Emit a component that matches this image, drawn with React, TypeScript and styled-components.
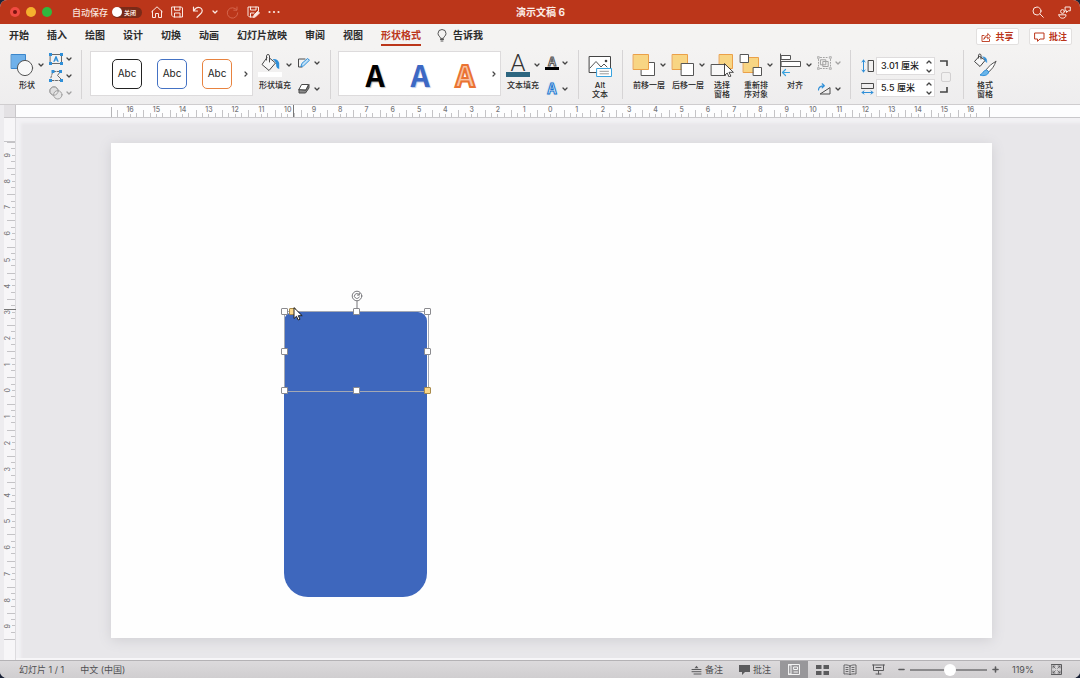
import React from "react";
import styled, { createGlobalStyle, css } from "styled-components";

const latin = `Inter, "Noto Sans CJK SC", sans-serif`;
const cjk = `"Noto Sans CJK SC", sans-serif`;
const red = "#bb361a";
const ink = "#444";
const blue = "#2f8fd8";

const GlobalStyle = createGlobalStyle`
  *, *::before, *::after { box-sizing: border-box; }
  html, body { margin: 0; height: 100%; background: #1c2438; }
  #root { height: 100%; }
  button, input { font: inherit; color: inherit; margin: 0; padding: 0; border: 0; background: none; }
  svg { display: block; flex: none; }
`;

const Window = styled.div`
  display: flex;
  flex-direction: column;
  min-height: 100vh;
  border-radius: 7px;
  overflow: hidden;
  background: #e8e7ea;
  font-family: ${latin};
  font-size: 9px;
  color: #333;
`;

/* ---------- title bar ---------- */

const TitleBar = styled.header`
  display: grid;
  grid-template-columns: 1fr auto 1fr;
  align-items: center;
  height: 24px;
  padding: 0 9px 0 10px;
  background: ${red};
  color: #f8e3dc;
`;

const TitleSide = styled.div<{ $end?: boolean }>`
  display: flex;
  align-items: center;
  gap: ${(p) => (p.$end ? 14 : 8)}px;
  justify-content: ${(p) => (p.$end ? "flex-end" : "flex-start")};
`;

const Lights = styled.div`
  display: flex;
  gap: 6px;
  margin-right: 12px;
`;

const Light = styled.button<{ $color: string; $dot?: boolean }>`
  display: grid;
  place-items: center;
  width: 10px;
  height: 10px;
  border-radius: 50%;
  background: ${(p) => p.$color};
  ${(p) =>
    p.$dot &&
    css`
      &::after {
        content: "";
        width: 4px;
        height: 4px;
        border-radius: 50%;
        background: #7a1410;
      }
    `}
`;

const AutoSave = styled.label`
  display: flex;
  align-items: center;
  gap: 4px;
  font-size: 9px;
  font-weight: 500;
`;

const Switch = styled.span`
  display: flex;
  align-items: center;
  gap: 2px;
  width: 30px;
  height: 11px;
  border-radius: 6px;
  background: #7a2a18;
  font-size: 6px;
  font-weight: 700;
`;

const SwitchBox = styled.input`
  appearance: none;
  width: 10px;
  height: 10px;
  border-radius: 50%;
  background: #fff;
`;

const QuickTools = styled.div`
  display: flex;
  align-items: center;
  gap: 8px;
  margin-left: 1px;
`;

const IconButton = styled.button`
  display: grid;
  place-items: center;
`;

const Title = styled.h1`
  margin: 0;
  font-size: 10px;
  font-weight: 700;
  line-height: 12px;
  white-space: pre;
  color: #fbece7;
`;

/* ---------- tabs ---------- */

const TabBar = styled.nav`
  display: flex;
  align-items: center;
  height: 24px;
  padding: 0 8px 0 9px;
  background: #f4f3f2;
`;

const TabList = styled.div`
  display: flex;
  gap: 18px;
`;

const Tab = styled.button<{ $active?: boolean }>`
  height: 20px;
  border-bottom: 2px solid ${(p) => (p.$active ? red : "transparent")};
  font-size: 10px;
  font-weight: 700;
  line-height: 16px;
  white-space: nowrap;
  color: ${(p) => (p.$active ? red : "#2c2c2c")};
`;

const TellMe = styled(Tab)`
  display: flex;
  gap: 6px;
  align-items: center;
  margin-left: 16px;
`;

const TabActions = styled.div`
  display: flex;
  gap: 10px;
  margin-left: auto;
`;

const TabAction = styled.button`
  display: flex;
  align-items: center;
  justify-content: center;
  gap: 4px;
  width: 43px;
  height: 17px;
  margin-top: 1px;
  border: 1px solid #e2e0df;
  background: #fff;
  border-radius: 2px;
  color: ${red};
  font-size: 9px;
  font-weight: 700;
`;

/* ---------- ribbon ---------- */

const RibbonBar = styled.section`
  display: flex;
  height: 57px;
  padding: 2px 0 5px;
  border-bottom: 1px solid #cfcdcf;
  background: linear-gradient(#f4f3f2, #eeedee);
`;

const Group = styled.div<{ $start?: number; $end?: number }>`
  display: flex;
  gap: 5px;
  padding: 3px ${(p) => p.$end ?? 10}px 0 ${(p) => p.$start ?? 10}px;
  border-right: 1px solid #d6d4d5;
  &:last-child {
    border-right: 0;
  }
`;

const ToolButton = styled.button<{ $wide?: boolean }>`
  display: flex;
  flex-direction: column;
  align-items: center;
  gap: 4px;
  width: ${(p) => (p.$wide ? 34 : 24)}px;
`;

const ToolFace = styled.span`
  display: flex;
  align-items: center;
  gap: 4px;
  height: 24px;
`;

const ToolLabel = styled.span`
  font-size: 8px;
  font-weight: 500;
  line-height: 9px;
  white-space: pre;
  text-align: center;
  color: #2a2a2a;
`;

const SmallTools = styled.div<{ $rows?: number }>`
  display: flex;
  flex-direction: column;
  justify-content: space-between;
  width: 23px;
  height: ${(p) => (p.$rows === 3 ? 48 : 42)}px;
  margin-top: ${(p) => (p.$rows === 3 ? -1 : 1)}px;
  padding-top: 2px;
  padding-top: ${(p) => (p.$rows === 3 ? 0 : 2)}px;
`;

const SmallTool = styled.button<{ $dim?: boolean }>`
  display: flex;
  align-items: center;
  gap: 3px;
  height: 14px;
  opacity: ${(p) => (p.$dim ? 0.45 : 1)};
`;

const Gallery = styled.div`
  display: flex;
  align-items: center;
  justify-content: flex-end;
  gap: 15px;
  width: 163px;
  height: 45px;
  margin-top: -2px;
  padding-right: 3px;
  border: 1px solid #dddbdc;
  background: #fff;
`;

const Swatch = styled.button<{ $edge: string }>`
  width: 30px;
  height: 30px;
  border: 1px solid ${(p) => p.$edge};
  border-radius: 5px;
  font-size: 10px;
  line-height: 26px;
  padding-bottom: 2px;
  color: #222;
`;

const GalleryMore = styled.button`
  display: grid;
  place-items: center;
  width: 6px;
  height: 12px;
  margin-left: -4px;
`;

const WordArt = styled.button<{ $look: "black" | "blue" | "orange" }>`
  width: 30px;
  height: 36px;
  font-family: ${cjk};
  font-size: 30px;
  font-weight: 700;
  line-height: 32px;
  ${(p) =>
    p.$look === "black" &&
    css`
      color: #000;
      text-shadow: 1px 1px 1px #bbb;
    `}
  ${(p) =>
    p.$look === "blue" &&
    css`
      color: #3c68c4;
      text-shadow: 1px 1px 1px #b9c9ea;
    `}
  ${(p) =>
    p.$look === "orange" &&
    css`
      color: #f9c3a2;
      -webkit-text-stroke: 2px #ea7333;
      paint-order: normal;
    `}
`;

const FillLetter = styled.span`
  width: 24px;
  height: 24px;
  border-bottom: 5px solid #2d6680;
  font-family: Roboto, sans-serif;
  font-size: 24px;
  font-weight: 300;
  line-height: 20px;
  text-align: center;
  color: #333;
`;

const MiniLetter = styled.span<{ $glow?: boolean }>`
  width: 14px;
  height: 14px;
  font-family: ${cjk};
  font-size: 14px;
  font-weight: 700;
  text-align: center;
  ${(p) =>
    p.$glow
      ? css`
          color: #fff;
          line-height: 13px;
          -webkit-text-stroke: 1px #1c78cf;
          text-shadow: 0 0 2px #6db4ee;
        `
      : css`
          font-size: 12px;
          line-height: 10px;
          color: #fff;
          -webkit-text-stroke: 1px #555;
          border-bottom: 3px solid #000;
        `}
`;

const SizeGrid = styled.div`
  display: grid;
  grid-template-columns: 13px 59px;
  column-gap: 2px;
  row-gap: 4px;
  align-content: start;
  align-items: center;
  padding-top: 4px;
`;

const SizeField = styled.div`
  display: flex;
  align-items: center;
  height: 18px;
  padding-right: 2px;
  border: 1px solid #dedcdd;
  background: #fff;
`;

const SizeInput = styled.input`
  width: 46px;
  padding-left: 4px;
  font-size: 9px;
  font-weight: 500;
  line-height: 12px;
  color: #222;
  outline: none;
`;

const Stepper = styled.div`
  display: flex;
  flex-direction: column;
  gap: 5px;
  margin-left: auto;
`;

const RatioLock = styled.div`
  display: flex;
  flex-direction: column;
  align-items: flex-start;
  justify-content: space-between;
  width: 11px;
  height: 33px;
  margin-top: 7px;
`;

const RatioBox = styled.input`
  appearance: none;
  align-self: flex-end;
  width: 10px;
  height: 10px;
  border: 1px solid #d2d0d1 !important;
  border-radius: 2px;
`;

/* ---------- rulers and slide ---------- */

const Document = styled.main`
  display: grid;
  grid-template-columns: 12px 1fr;
  grid-template-rows: 13px 1fr;
  flex: 1;
  padding-left: 4px;
  background: #edecef;
`;

const Corner = styled.div`
  background: #e3e1e4;
  border-right: 1px solid #c9c7ca;
  border-bottom: 1px solid #c9c7ca;
`;

const TopRuler = styled.div`
  position: relative;
  padding: 0 90px 0 95px;
  border-bottom: 1px solid #c9c8cb;
  background: #fdfdfe;
`;

const SideRuler = styled.div`
  position: relative;
  padding: 23px 0 20px;
  border-right: 1px solid #dcdbde;
  background: #f7f6f8;
`;

const Scale = styled.div<{ $side?: boolean }>`
  display: flex;
  flex-direction: ${(p) => (p.$side ? "column" : "row")};
  height: 100%;
  ${(p) =>
    p.$side
      ? css`
          border-top: 1px solid #c5c4c7;
          border-bottom: 1px solid #c5c4c7;
        `
      : css`
          padding: 0 6px;
          background:
            linear-gradient(#b5b4b7, #b5b4b7) left bottom / 1px 10px no-repeat,
            linear-gradient(#b5b4b7, #b5b4b7) right bottom / 1px 10px no-repeat;
        `}
`;

const tick = "linear-gradient(#c4c3c6, #c4c3c6)";

const Centimetre = styled.span<{ $side?: boolean }>`
  flex: 1;
  font-size: 7px;
  font-weight: 500;
  color: #77767a;
  text-align: center;
  background-repeat: no-repeat;
  background-image: ${tick}, ${tick}, ${tick}, ${tick};
  ${(p) =>
    p.$side
      ? css`
          display: grid;
          justify-items: start;
          align-items: center;
          background-position: right top, right 25%, right 50%, right 75%;
          background-size: 8px 1px, 4px 1px, 3px 1px, 4px 1px;
        `
      : css`
          line-height: 9px;
          background-position: left bottom, 25% bottom, 50% bottom, 75% bottom;
          background-size: 1px 7px, 1px 4px, 1px 3px, 1px 4px;
        `}
`;

const SideLabel = styled.span`
  writing-mode: vertical-rl;
  transform: rotate(180deg);
  line-height: 8px;
`;

const TopMarker = styled.i`
  position: absolute;
  top: 0;
  left: 277px;
  width: 1px;
  height: 12px;
  background: #777;
`;

const SideMarker = styled.i`
  position: absolute;
  top: 191px;
  left: 0;
  width: 12px;
  height: 1px;
  background: #777;
`;

const Workspace = styled.div`
  padding: 25px 88px 20px 95px;
  border-bottom: 2px solid #f7f6f8;
  background: #e8e7ea;
  box-shadow: inset 6px 6px 3px -1px #f2f1f4;
`;

const Slide = styled.div`
  position: relative;
  width: 100%;
  aspect-ratio: 881 / 495;
  background: #fefefe;
  box-shadow: 0 2px 12px #cfced2;
`;

const Body = styled.div`
  position: absolute;
  left: 173px;
  top: 169px;
  width: 143px;
  height: 285px;
  border-radius: 9px 9px 24px 24px;
  background: #3e67bd;
`;

const Selection = styled.div`
  position: absolute;
  left: 173px;
  top: 168px;
  width: 145px;
  height: 81px;
  border: 1px solid #a3a8b4;
`;

const Handle = styled.i<{ $x: string; $y: string; $gold?: boolean }>`
  position: absolute;
  left: ${(p) => p.$x};
  top: ${(p) => p.$y};
  width: 7px;
  height: 7px;
  margin: -4px;
  border: 1px solid ${(p) => (p.$gold ? "#a98b4c" : "#8b8b8f")};
  border-radius: 1px;
  background: ${(p) => (p.$gold ? "#fbd88b" : "#fff")};
`;

const Rotate = styled.div`
  position: absolute;
  left: 50%;
  top: -22px;
  margin-left: -6px;
`;

const Pointer = styled.div`
  position: absolute;
  left: 182px;
  top: 164px;
`;

/* ---------- status bar ---------- */

const StatusBar = styled.footer`
  display: flex;
  align-items: center;
  height: 18px;
  padding: 0 18px 0 19px;
  border-top: 1px solid #b4b2b5;
  background: linear-gradient(#dcdadc, #d0ced0);
  font-size: 9px;
  color: #505052;
`;

const StatusText = styled.span`
  margin-right: 16px;
  white-space: pre;
`;

const StatusRight = styled.div`
  display: flex;
  align-items: center;
  height: 100%;
  margin-left: auto;
`;

const StatusButton = styled.button`
  display: flex;
  align-items: center;
  gap: 3px;
  margin-right: 16px;
`;

const ViewButton = styled.button<{ $active?: boolean }>`
  display: grid;
  place-items: center;
  width: 28px;
  height: 17px;
  background: ${(p) => (p.$active ? "#98979a" : "transparent")};
`;

const ViewSwitch = styled.div`
  display: flex;
  margin: 0 6px 0 -7px;
`;

const Zoom = styled.input`
  appearance: none;
  width: 77px;
  height: 12px;
  margin: 0 5px !important;
  background: linear-gradient(#8b8a8c, #8b8a8c) center / 100% 2px no-repeat !important;
  &::-webkit-slider-thumb {
    appearance: none;
    width: 12px;
    height: 12px;
    border-radius: 50%;
    background: #fff;
  }
`;

const ZoomValue = styled.button`
  width: 24px;
  margin: 0 15px 0 13px;
  text-align: left;
`;

/* ---------- icons ---------- */

type SvgProps = { w: number; h?: number; color?: string; children: React.ReactNode };
const Svg = ({ w, h = w, color = ink, children }: SvgProps) => (
  <svg width={w} height={h} viewBox={`0 0 ${w} ${h}`} fill="none" stroke={color} strokeLinecap="round" strokeLinejoin="round" aria-hidden="true">
    {children}
  </svg>
);

const Chevron = ({ color = ink, up = false }: { color?: string; up?: boolean }) => (
  <Svg w={6} h={4} color={color}>
    <path d={up ? "M1 3l2-2 2 2" : "M1 1l2 2 2-2"} strokeWidth="1.3" />
  </Svg>
);

const ArrowRight = () => (
  <Svg w={4} h={6}>
    <path d="M1 1l2 2-2 2" strokeWidth="1.2" />
  </Svg>
);

const cream = "#fbe9e3";

const HomeIcon = () => (
  <Svg w={12} color={cream}>
    <path d="M.7 5.7L6 .8l5.300 4.900M1.500 5v6.500h3V7.500h3v4h3V5" />
  </Svg>
);
const SaveIcon = ({ pen = false }: { pen?: boolean }) => (
  <Svg w={13} h={12} color={cream}>
    <path d={pen ? "M6 11H2.500L1 9.500V1h10.500v4M3.500 1v3h5.500V1M3.500 11V7h3.500" : "M1 1h9.500l1 1v9H2.500L1 9.500zM3.500 1v3.200h5.500V1M3.500 11V7h5.500v4"} />
    {pen && <path d="M6.500 11.200l.6-2.300L10.800 5.200l1.700 1.700-3.700 3.700z" fill={cream} />}
  </Svg>
);
const UndoIcon = () => (
  <Svg w={12} color={cream}>
    <path d="M1.500 1v4h4M1.800 4.800C3.500 2 6 .800 8.200 1.800c2.300 1 2.600 3.700.9 5.500L5 11.300" strokeWidth="1.200" />
  </Svg>
);
const RedoIcon = () => (
  <Svg w={13} color="#d4654d">
    <path d="M11 1v3.200H7.800M10.800 4A5.200 5.200 0 1 0 11.700 6.800" />
  </Svg>
);
const DotsIcon = () => (
  <Svg w={12} h={4} color="none">
    <g fill={cream}>
      <circle cx="1.500" cy="2" r="1.100" />
      <circle cx="6" cy="2" r="1.100" />
      <circle cx="10.500" cy="2" r="1.100" />
    </g>
  </Svg>
);
const SearchIcon = () => (
  <Svg w={12} color={cream}>
    <circle cx="5" cy="5" r="4" />
    <path d="M8 8l3.300 3.300" />
  </Svg>
);
const PeopleIcon = () => (
  <Svg w={13} color={cream}>
    <circle cx="4.500" cy="5.500" r="1.900" />
    <path d="M1 8.800h7c.4 4.600-7.400 4.600-7 0zM7.500 1h4.800v3.800h-2L8.500 6.500V4.800h-1z" />
  </Svg>
);
const BulbIcon = () => (
  <Svg w={10} h={13}>
    <path d="M3.500 9C3.500 7.500 1 7 1 4.500a4 4 0 0 1 8 0C9 7 6.500 7.500 6.500 9zM3.500 10.500h3M4 12h2" strokeWidth=".9" />
  </Svg>
);
const ShareIcon = () => (
  <Svg w={10} color={red}>
    <path d="M3 3.500H1v6h7.500V7M3 7c.3-2.300 1.700-3.500 3.700-3.500V1.500L9.500 4.300 6.700 6.800V5C5.200 5 4 5.500 3 7z" strokeWidth=".9" />
  </Svg>
);
const CommentIcon = () => (
  <Svg w={11} h={10} color={red}>
    <path d="M1 1h9v6H6L3.500 9.300V7H1z" />
  </Svg>
);

const ShapesIcon = () => (
  <Svg w={24}>
    <rect x="1.500" y="1.500" width="14" height="14" fill="#6fb1ea" stroke="#3b86cb" />
    <circle cx="15" cy="15" r="7.600" fill="#f8f8f8" stroke="#555" />
  </Svg>
);
const TextBoxIcon = () => (
  <Svg w={14} h={12} color="#6a6a6a">
    <rect x="1.500" y="1.500" width="11" height="9" />
    <path d="M5 8.500L7 3.500l2 5M5.700 7h2.600" stroke={blue} strokeWidth="1.200" />
    <g fill={blue} stroke="none">
      <path d="M0 0h3v3H0zM11 0h3v3h-3zM0 9h3v3H0zM11 9h3v3h-3z" />
    </g>
  </Svg>
);
const EditPointsIcon = () => (
  <Svg w={14} h={12} color="#6a6a6a">
    <path d="M4.500 1.500h6.500M3.500 2.500L1.500 9M3 10.500h8" strokeDasharray="2 1.500" />
    <path d="M11 2L8.500 5.500 12 9" />
    <g fill={blue} stroke="none">
      <path d="M2.500 0h3v3h-3zM10 0h3v3h-3zM0 9h3v3H0zM11 9h3v3h-3z" />
    </g>
  </Svg>
);
const MergeIcon = () => (
  <Svg w={14}>
    <circle cx="5" cy="5" r="4.200" fill="#ccc" />
    <circle cx="8.800" cy="8.800" r="4.200" fill="#ddd" />
    <circle cx="5" cy="5" r="4.200" />
  </Svg>
);
const BucketIcon = () => (
  <Svg w={24}>
    <path d="M8.500 7V2.800c0-1.700 3-1.700 3 0V9M9 4.500L4 11.500l7 6 6.500-7.500-6-5" fill="#f7f7f7" stroke="#4a4a4a" />
    <path d="M14.500 6c3.500-.500 6 1.200 6.700 4v6c-1.700-.300-2.700-1.500-3-3 .300-3-1-5-3.700-7z" fill={blue} stroke="none" />
    <path d="M0 19h24v5H0z" fill="#fff" stroke="none" />
  </Svg>
);
const OutlineIcon = () => (
  <Svg w={14} h={12}>
    <path d="M8 2H1.500v8H5" stroke="#4a4a4a" />
    <path d="M4 9.300l1-3L10.500 1.500l2 1.700L7 8.500z" fill="#bfe0f8" stroke={blue} />
  </Svg>
);
const EffectsIcon = () => (
  <Svg w={14} h={12} color="#4a4a4a">
    <path d="M5 1.500h6.500L9 7H2z" fill="#fff" />
    <path d="M2 7v3h6.500L12 5V1.500L9 7z" fill="#8a8a8a" />
  </Svg>
);
const AltIcon = () => (
  <Svg w={24}>
    <rect x="1.500" y="3.500" width="21" height="16" fill="#fff" stroke="#444" />
    <path d="M2 15l6-6.500 5 5.500 3-3 3 3" stroke="#555" />
    <circle cx="18" cy="8" r="1.300" fill="#444" stroke="none" />
    <rect x="9" y="15.500" width="14.500" height="8" fill="#fff" stroke="#38a3df" />
    <path d="M12 18.300h8.500M12 20.800h8.500" stroke="#999" />
  </Svg>
);
const gold = { fill: "#f8d583", stroke: "#eba048" };
const FrontIcon = () => (
  <Svg w={24}>
    <rect x="9.500" y="9.500" width="13" height="13" fill="#fff" stroke="#555" />
    <rect x="1.500" y="1.500" width="15" height="15" {...gold} />
  </Svg>
);
const BackIcon = () => (
  <Svg w={24}>
    <rect x="1.500" y="1.500" width="15" height="15" {...gold} />
    <rect x="10.500" y="10.500" width="12" height="12" fill="#fff" stroke="#555" />
  </Svg>
);
const PaneIcon = () => (
  <Svg w={24}>
    <rect x="9.500" y="1.500" width="13" height="14" {...gold} />
    <rect x="1.500" y="11.500" width="14" height="11" fill="#f8f8f8" stroke="#555" />
    <path d="M14.500 11v11.500l2.700-2.500 1.900 4 1.800-.900-1.900-3.800h4z" fill="#fff" stroke="#333" strokeWidth=".9" />
  </Svg>
);
const ReorderIcon = () => (
  <Svg w={24}>
    <rect x="4.500" y="4.500" width="15" height="15" {...gold} />
    <rect x="1.500" y="1.500" width="8" height="8" fill="#fff" stroke="#555" />
    <rect x="14.500" y="14.500" width="8" height="8" fill="#fff" stroke="#555" />
  </Svg>
);
const AlignIcon = () => (
  <Svg w={24} color="#555">
    <path d="M2.500 1v22" />
    <rect x="3.500" y="2.500" width="9" height="4" fill="#fff" />
    <rect x="3.500" y="8.500" width="19" height="5" fill="#fff" />
    <path d="M11.500 19.500h-7M7.500 16.500l-3 3 3 3" stroke="#38a3df" strokeWidth="1.200" />
  </Svg>
);
const GroupIcon = () => (
  <Svg w={15} h={14}>
    <path d="M3.500 1.500h8M3.500 12.500h8M1.500 3.500v7M13.500 3.500v7" strokeDasharray="1 1.800" />
    <rect x="3.800" y="3.800" width="5" height="5" />
    <rect x="6.200" y="5.500" width="5" height="5" />
    <path d="M.7.7h1.600v1.600H.7zM12.700.7h1.600v1.600h-1.600zM.7 11.700h1.600v1.600H.7zM12.700 11.700h1.600v1.600h-1.600z" strokeWidth=".8" />
  </Svg>
);
const RotateIcon = () => (
  <Svg w={15} h={12}>
    <path d="M13 5v6H3.500z" stroke="#4a4a4a" />
    <path d="M1.500 7C1.500 3.800 3 2.800 7 2.800M5.200.800l2.100 2-2.100 2" stroke={blue} strokeWidth="1.200" />
  </Svg>
);
const HeightIcon = () => (
  <Svg w={13} h={14} color="#4a4a4a">
    <rect x="7.500" y="1.500" width="5" height="11" />
    <path d="M2.500 1v12M1 3l1.500-2L4 3M1 11l1.500 2L4 11" stroke={blue} />
  </Svg>
);
const WidthIcon = () => (
  <Svg w={13} h={13} color="#4a4a4a">
    <rect x=".500" y="1.500" width="12" height="5" />
    <path d="M1 10.500h11M3 9l-2 1.500L3 12M10 9l2 1.500-2 1.500" stroke={blue} />
  </Svg>
);
const BracketIcon = ({ down = false }: { down?: boolean }) => (
  <Svg w={8} h={7}>
    <path d={down ? "M0 6h7V1" : "M0 1h7v5"} strokeWidth="1.600" strokeLinecap="butt" strokeLinejoin="miter" />
  </Svg>
);
const FormatIcon = () => (
  <Svg w={24}>
    <path d="M5.500 5V2.200c0-1.500 2.500-1.500 2.500 0V6M6 3.500L1.500 8.500l5.500 5L12 7.500z" fill="#f8f8f8" stroke="#444" />
    <path d="M10 4c2.500 0 4 1.500 3.700 5.500C12 8.500 12 6 10 4z" fill={blue} stroke={blue} strokeWidth=".6" />
    <path d="M22.800 8.500c-4 2-7.300 5-9.500 8.200l2.400 2.200c3.200-2.500 5.800-6 7.100-10.400z" fill="#fff" stroke="#555" />
    <path d="M13 17c-3 .300-2.500 3.500-6 5 3.500 1.300 8 .700 8.700-3z" fill="#69b5ea" stroke={blue} />
  </Svg>
);

const grey = "#5b5b5d";
const NotesIcon = () => (
  <Svg w={11} h={10} color={grey}>
    <path d="M1 4.500h9M1 6.700h9M3 9h7" />
    <path d="M3.500 3.300L5.500.800l2 2.500z" fill={grey} stroke="none" />
  </Svg>
);
const BubbleIcon = () => (
  <Svg w={11} h={10}>
    <path d="M0 0h11v7H6L3 10V7H0z" fill={grey} stroke="none" />
  </Svg>
);
const NormalIcon = () => (
  <Svg w={13} h={11} color="#f4f4f4">
    <rect x=".500" y=".500" width="11" height="10" />
    <path d="M1 1h2v9H1zM6 3h3.500v2.500H6zM6 8h3.500" />
  </Svg>
);
const SorterIcon = () => (
  <Svg w={13} h={10}>
    <path d="M0 0h5.500v4H0zM7.500 0H13v4H7.500zM0 6h5.500v4H0zM7.500 6H13v4H7.500z" fill={grey} stroke="none" />
  </Svg>
);
const BookIcon = () => (
  <Svg w={14} h={11} color={grey}>
    <path d="M7 2v8.500M7 2C5 .800 3 .800 1 1v9c2-.200 4-.200 6 .5 2-.7 4-.7 6-.5V1c-2-.200-4-.200-6 1zM3 3.500h2M3 5.500h2M3 7.500h2M9 3.500h2M9 5.500h2M9 7.500h2" strokeWidth=".9" />
  </Svg>
);
const ShowIcon = () => (
  <Svg w={13} h={11} color={grey}>
    <path d="M.500 1h12M1.500 1v5.500h10V1M4 3.500h5M6.500 6.500V10M4 10h5" />
  </Svg>
);
const PlusMinus = ({ plus = false }: { plus?: boolean }) => (
  <Svg w={7} color={grey}>
    <path d={plus ? "M1 3.500h5M3.500 1v5" : "M1 3.500h5"} strokeWidth="1.600" />
  </Svg>
);
const FitIcon = () => (
  <Svg w={11} color={grey}>
    <rect x=".500" y=".500" width="10" height="10" />
    <path d="M2 4V2h2M7 2h2v2M9 7v2H7M4 9H2V7M2 2l2.300 2.300M9 2L6.700 4.300M2 9l2.300-2.300M9 9L6.700 6.700" strokeWidth=".8" />
  </Svg>
);

/* ---------- pieces ---------- */

type ToolProps = { icon: React.ReactNode; label: string; menu?: boolean };
const Tool = ({ icon, label, menu }: ToolProps) => (
  <ToolButton $wide={menu}>
    <ToolFace>
      {icon}
      {menu && <Chevron />}
    </ToolFace>
    <ToolLabel>{label}</ToolLabel>
  </ToolButton>
);

const MenuTool = ({ icon, name, dim }: { icon: React.ReactNode; name: string; dim?: boolean }) => (
  <SmallTool aria-label={name} $dim={dim}>
    {icon}
    <Chevron />
  </SmallTool>
);

const Size = ({ icon, name, value }: { icon: React.ReactNode; name: string; value: string }) => (
  <>
    {icon}
    <SizeField>
      <SizeInput aria-label={name} defaultValue={value} />
      <Stepper>
        <IconButton aria-label={`${name}增加`}><Chevron up /></IconButton>
        <IconButton aria-label={`${name}减少`}><Chevron /></IconButton>
      </Stepper>
    </SizeField>
  </>
);

const tabs = ["开始", "插入", "绘图", "设计", "切换", "动画", "幻灯片放映", "审阅", "视图", "形状格式"];
const topMarks = Array.from({ length: 33 }, (_, i) => Math.abs(16 - i));
const sideMarks = Array.from({ length: 19 }, (_, i) => Math.abs(9 - i));
const handles = [
  ["0%", "0%"], ["50%", "0%"], ["100%", "0%"],
  ["0%", "50%"], ["100%", "50%"],
  ["0%", "100%"], ["50%", "100%"],
];

export default function App() {
  return (
    <Window>
      <GlobalStyle />
      <TitleBar>
        <TitleSide>
          <Lights>
            <Light $color="#f04b42" $dot aria-label="关闭" />
            <Light $color="#f5b12e" aria-label="最小化" />
            <Light $color="#30b93e" aria-label="缩放" />
          </Lights>
          <AutoSave>
            自动保存
            <Switch>
              <SwitchBox type="checkbox" />
              关闭
            </Switch>
          </AutoSave>
          <QuickTools>
            <IconButton aria-label="主页"><HomeIcon /></IconButton>
            <IconButton aria-label="保存"><SaveIcon /></IconButton>
            <IconButton aria-label="撤消"><UndoIcon /></IconButton>
            <IconButton aria-label="撤消列表"><Chevron color={cream} /></IconButton>
            <IconButton aria-label="恢复"><RedoIcon /></IconButton>
            <IconButton aria-label="另存为"><SaveIcon pen /></IconButton>
            <IconButton aria-label="更多"><DotsIcon /></IconButton>
          </QuickTools>
        </TitleSide>
        <Title>演示文稿 6</Title>
        <TitleSide $end>
          <IconButton aria-label="搜索"><SearchIcon /></IconButton>
          <IconButton aria-label="协作"><PeopleIcon /></IconButton>
        </TitleSide>
      </TitleBar>

      <TabBar>
        <TabList>
          {tabs.map((t) => (
            <Tab key={t} $active={t === "形状格式"}>{t}</Tab>
          ))}
        </TabList>
        <TellMe><BulbIcon />告诉我</TellMe>
        <TabActions>
          <TabAction><ShareIcon />共享</TabAction>
          <TabAction><CommentIcon />批注</TabAction>
        </TabActions>
      </TabBar>

      <RibbonBar>
        <Group $end={9}>
          <Tool icon={<ShapesIcon />} label="形状" menu />
          <SmallTools $rows={3}>
            <MenuTool icon={<TextBoxIcon />} name="文本框" />
            <MenuTool icon={<EditPointsIcon />} name="编辑形状" />
            <MenuTool icon={<MergeIcon />} name="合并形状" dim />
          </SmallTools>
        </Group>
        <Group $start={8}>
          <Gallery>
            <Swatch $edge="#222">Abc</Swatch>
            <Swatch $edge="#4472c4">Abc</Swatch>
            <Swatch $edge="#e8833f">Abc</Swatch>
            <GalleryMore aria-label="更多样式"><ArrowRight /></GalleryMore>
          </Gallery>
          <Tool icon={<BucketIcon />} label="形状填充" menu />
          <SmallTools>
            <MenuTool icon={<OutlineIcon />} name="形状轮廓" />
            <MenuTool icon={<EffectsIcon />} name="形状效果" />
          </SmallTools>
        </Group>
        <Group $start={7}>
          <Gallery>
            <WordArt $look="black">A</WordArt>
            <WordArt $look="blue">A</WordArt>
            <WordArt $look="orange">A</WordArt>
            <GalleryMore aria-label="更多艺术字"><ArrowRight /></GalleryMore>
          </Gallery>
          <Tool icon={<FillLetter>A</FillLetter>} label="文本填充" menu />
          <SmallTools>
            <MenuTool icon={<MiniLetter>A</MiniLetter>} name="文本轮廓" />
            <MenuTool icon={<MiniLetter $glow>A</MiniLetter>} name="文本效果" />
          </SmallTools>
        </Group>
        <Group $start={9}>
          <Tool icon={<AltIcon />} label={"Alt\n文本"} />
        </Group>
        <Group $start={9}>
          <Tool icon={<FrontIcon />} label="前移一层" menu />
          <Tool icon={<BackIcon />} label="后移一层" menu />
          <Tool icon={<PaneIcon />} label={"选择\n窗格"} />
          <Tool icon={<ReorderIcon />} label={"重新排\n序对象"} menu />
          <Tool icon={<AlignIcon />} label="对齐" menu />
          <SmallTools>
            <MenuTool icon={<GroupIcon />} name="组合" dim />
            <MenuTool icon={<RotateIcon />} name="旋转" />
          </SmallTools>
        </Group>
        <Group $end={12}>
          <SizeGrid>
            <Size icon={<HeightIcon />} name="高度" value="3.01 厘米" />
            <Size icon={<WidthIcon />} name="宽度" value="5.5 厘米" />
          </SizeGrid>
          <RatioLock>
            <BracketIcon />
            <RatioBox type="checkbox" aria-label="锁定纵横比" />
            <BracketIcon down />
          </RatioLock>
        </Group>
        <Group $start={9}>
          <Tool icon={<FormatIcon />} label={"格式\n窗格"} />
        </Group>
      </RibbonBar>

      <Document>
        <Corner />
        <TopRuler>
          <Scale>
            {topMarks.map((n, i) => <Centimetre key={i}>{n}</Centimetre>)}
          </Scale>
          <TopMarker />
        </TopRuler>
        <SideRuler>
          <Scale $side>
            {sideMarks.map((n, i) => (
              <Centimetre key={i} $side><SideLabel>{n}</SideLabel></Centimetre>
            ))}
          </Scale>
          <SideMarker />
        </SideRuler>
        <Workspace>
          <Slide>
            <Body />
            <Selection>
              {handles.map(([x, y]) => <Handle key={x + y} $x={x} $y={y} />)}
              <Handle $x="100%" $y="100%" $gold />
              <Handle $x="8px" $y="0%" $gold />
              <Rotate>
                <Svg w={12} h={20} color="#77777b">
                  <path d="M6 11v7" />
                  <circle cx="6" cy="6" r="4.800" fill="#fff" />
                  <path d="M8 4.500A2.500 2.500 0 1 0 8.300 7M8.300 3.300v1.800H6.500" />
                </Svg>
              </Rotate>
            </Selection>
            <Pointer>
              <Svg w={10} h={14} color="#222">
                <path d="M1 1v10.500l2.500-2.200 1.700 3.700 1.800-.800-1.700-3.500h3.500z" fill="#fff" strokeWidth="1" />
              </Svg>
            </Pointer>
          </Slide>
        </Workspace>
      </Document>

      <StatusBar>
        <StatusText>幻灯片 1 / 1</StatusText>
        <StatusText>中文 (中国)</StatusText>
        <StatusRight>
          <StatusButton><NotesIcon />备注</StatusButton>
          <StatusButton><BubbleIcon />批注</StatusButton>
          <ViewSwitch>
            <ViewButton $active aria-label="普通视图"><NormalIcon /></ViewButton>
            <ViewButton aria-label="幻灯片浏览"><SorterIcon /></ViewButton>
            <ViewButton aria-label="阅读视图"><BookIcon /></ViewButton>
            <ViewButton aria-label="幻灯片放映"><ShowIcon /></ViewButton>
          </ViewSwitch>
          <IconButton aria-label="缩小"><PlusMinus /></IconButton>
          <Zoom type="range" min={0} max={100} defaultValue={53} aria-label="缩放" />
          <IconButton aria-label="放大"><PlusMinus plus /></IconButton>
          <ZoomValue>119%</ZoomValue>
          <IconButton aria-label="适应窗口"><FitIcon /></IconButton>
        </StatusRight>
      </StatusBar>
    </Window>
  );
}
